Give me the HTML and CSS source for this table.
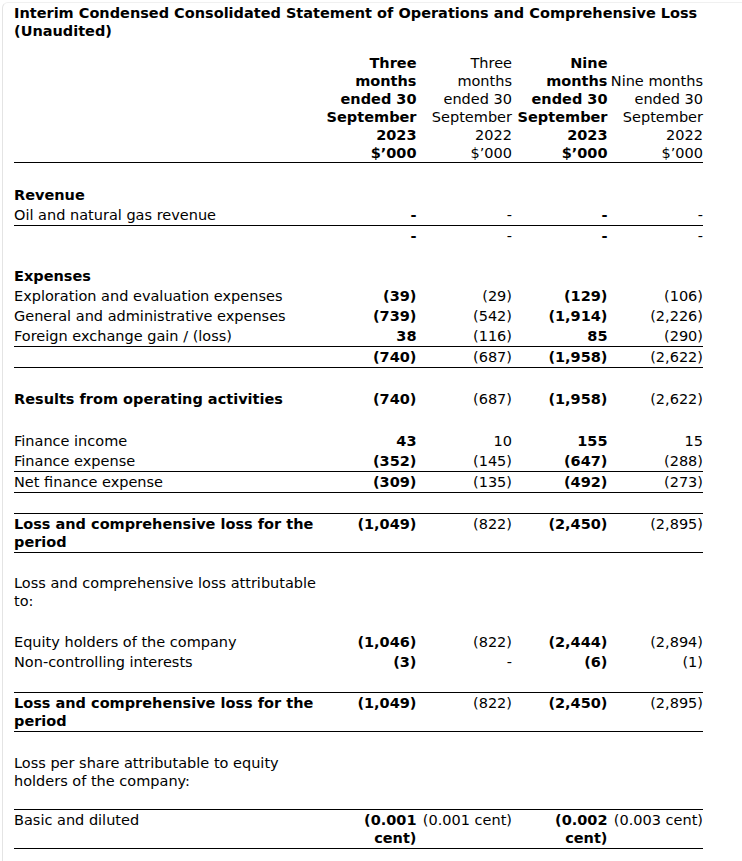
FILE: index.html
```html
<!DOCTYPE html>
<html>
<head>
<meta charset="utf-8">
<link rel="stylesheet" href="styles.css">
</head>
<body>
<div class="card">
  <h1 class="title">Interim Condensed Consolidated Statement of Operations and Comprehensive Loss (Unaudited)</h1>
  <table class="stmt">
    <colgroup>
      <col class="c-label"><col class="c-num"><col class="c-num"><col class="c-num"><col class="c-num">
    </colgroup>
    <tr class="head">
      <td></td>
      <td class="b">Three<br>months<br>ended 30<br>September<br>2023<br>$’000</td>
      <td>Three<br>months<br>ended 30<br>September<br>2022<br>$’000</td>
      <td class="b">Nine<br>months<br>ended 30<br>September<br>2023<br>$’000</td>
      <td>Nine months<br>ended 30<br>September<br>2022<br>$’000</td>
    </tr>
    <tr class="gap g22"><td colspan="5"></td></tr>
    <tr><td class="b">Revenue</td><td></td><td></td><td></td><td></td></tr>
    <tr class="rule"><td>Oil and natural gas revenue</td><td class="b">-</td><td>-</td><td class="b">-</td><td>-</td></tr>
    <tr><td></td><td class="b">-</td><td>-</td><td class="b">-</td><td>-</td></tr>
    <tr class="gap g20"><td colspan="5"></td></tr>
    <tr><td class="b">Expenses</td><td></td><td></td><td></td><td></td></tr>
    <tr><td>Exploration and evaluation expenses</td><td class="b">(39)</td><td>(29)</td><td class="b">(129)</td><td>(106)</td></tr>
    <tr><td>General and administrative expenses</td><td class="b">(739)</td><td>(542)</td><td class="b">(1,914)</td><td>(2,226)</td></tr>
    <tr class="rule"><td>Foreign exchange gain / (loss)</td><td class="b">38</td><td>(116)</td><td class="b">85</td><td>(290)</td></tr>
    <tr class="rule"><td></td><td class="b">(740)</td><td>(687)</td><td class="b">(1,958)</td><td>(2,622)</td></tr>
    <tr class="gap g21"><td colspan="5"></td></tr>
    <tr><td class="b">Results from operating activities</td><td class="b">(740)</td><td>(687)</td><td class="b">(1,958)</td><td>(2,622)</td></tr>
    <tr class="gap g22"><td colspan="5"></td></tr>
    <tr><td>Finance income</td><td class="b">43</td><td>10</td><td class="b">155</td><td>15</td></tr>
    <tr class="rule"><td>Finance expense</td><td class="b">(352)</td><td>(145)</td><td class="b">(647)</td><td>(288)</td></tr>
    <tr class="rule"><td>Net finance expense</td><td class="b">(309)</td><td>(135)</td><td class="b">(492)</td><td>(273)</td></tr>
    <tr class="gap g20 rule"><td colspan="5"></td></tr>
    <tr class="rule"><td class="b">Loss and comprehensive loss for the period</td><td class="b">(1,049)</td><td>(822)</td><td class="b">(2,450)</td><td>(2,895)</td></tr>
    <tr class="gap g20"><td colspan="5"></td></tr>
    <tr><td>Loss and comprehensive loss attributable to:</td><td></td><td></td><td></td><td></td></tr>
    <tr class="gap g21"><td colspan="5"></td></tr>
    <tr><td>Equity holders of the company</td><td class="b">(1,046)</td><td>(822)</td><td class="b">(2,444)</td><td>(2,894)</td></tr>
    <tr><td>Non-controlling interests</td><td class="b">(3)</td><td>-</td><td class="b">(6)</td><td>(1)</td></tr>
    <tr class="gap g20 rule"><td colspan="5"></td></tr>
    <tr class="rule"><td class="b">Loss and comprehensive loss for the period</td><td class="b">(1,049)</td><td>(822)</td><td class="b">(2,450)</td><td>(2,895)</td></tr>
    <tr class="gap g21"><td colspan="5"></td></tr>
    <tr><td>Loss per share attributable to equity holders of the company:</td><td></td><td></td><td></td><td></td></tr>
    <tr class="gap g18 rule"><td colspan="5"></td></tr>
    <tr class="rule"><td>Basic and diluted</td><td class="b">(0.001 cent)</td><td>(0.001 cent)</td><td class="b">(0.002 cent)</td><td>(0.003 cent)</td></tr>
  </table>
</div>
</body>
</html>
```

FILE: styles.css
```css
html, body {
  margin: 0;
  padding: 0;
  background: #ffffff;
  overflow: hidden;
}
body {
  font-family: "DejaVu Sans", Verdana, sans-serif;
  font-size: 14.5px;
  color: #000;
}
.card {
  margin: 2px 0 0 2px;
  padding: 1px 0 0 11px;
  border-left: 1px solid #e4e4e4;
  border-top: 1px solid #f0f0f0;
  border-top-left-radius: 6px;
  min-height: 900px;
}
.title {
  margin: 0;
  width: 700px;
  font-size: 14.5px;
  line-height: 18px;
  font-weight: bold;
}
.stmt {
  margin-top: 14px;
  width: 689px;
  border-collapse: separate;
  border-spacing: 0;
  table-layout: fixed;
}
.c-label { width: 307px; }
.c-num { width: 95.5px; }
.stmt td {
  padding: 1px 0;
  line-height: 18px;
  vertical-align: top;
  text-align: right;
}
.stmt td:first-child {
  text-align: left;
  padding-right: 4px;
}
.stmt .head td {
  padding: 0;
  vertical-align: bottom;
  border-bottom: 1px solid #000;
}
.stmt .b { font-weight: bold; }
.stmt .rule td { border-bottom: 1px solid #000; }
.stmt .gap td { padding: 0; line-height: 0; }
.stmt .g18 td { height: 18px; }
.stmt .g20 td { height: 20px; }
.stmt .g21 td { height: 21px; }
.stmt .g22 td { height: 22px; }
```
